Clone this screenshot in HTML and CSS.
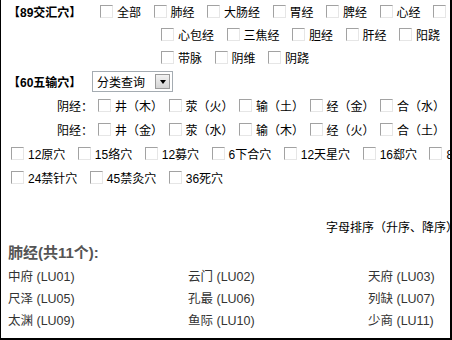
FILE: index.html
```html
<!DOCTYPE html>
<html lang="zh-CN">
<head>
<meta charset="utf-8">
<title>经穴查询</title>
<link rel="stylesheet" href="styles.css">
</head>
<body>
<div class="frame">
  <div class="content">
    <div class="row r1">
      <span class="title">【89交汇穴】</span>
      <div class="opts">
        <label class="opt"><input type="checkbox" class="cb"><span>全部</span></label>
        <label class="opt"><input type="checkbox" class="cb"><span>肺经</span></label>
        <label class="opt"><input type="checkbox" class="cb"><span>大肠经</span></label>
        <label class="opt"><input type="checkbox" class="cb"><span>胃经</span></label>
        <label class="opt"><input type="checkbox" class="cb"><span>脾经</span></label>
        <label class="opt"><input type="checkbox" class="cb"><span>心经</span></label>
        <label class="opt"><input type="checkbox" class="cb"><span>小肠经</span></label>
      </div>
    </div>
    <div class="row r2 indent">
      <label class="opt"><input type="checkbox" class="cb"><span>心包经</span></label>
      <label class="opt"><input type="checkbox" class="cb"><span>三焦经</span></label>
      <label class="opt"><input type="checkbox" class="cb"><span>胆经</span></label>
      <label class="opt"><input type="checkbox" class="cb"><span>肝经</span></label>
      <label class="opt"><input type="checkbox" class="cb"><span>阳跷</span></label>
    </div>
    <div class="row r3 indent">
      <label class="opt"><input type="checkbox" class="cb"><span>带脉</span></label>
      <label class="opt"><input type="checkbox" class="cb"><span>阴维</span></label>
      <label class="opt"><input type="checkbox" class="cb"><span>阴跷</span></label>
    </div>
    <div class="row r4">
      <span class="title t2">【60五输穴】</span>
      <div class="select">
        <span class="sel-text">分类查询</span>
        <span class="sel-btn"><span class="tri"></span></span>
      </div>
    </div>
    <div class="row r5 sub">
      <span class="lbl">阴经：</span>
      <label class="opt"><input type="checkbox" class="cb"><span>井（木）</span></label>
      <label class="opt"><input type="checkbox" class="cb"><span>荥（火）</span></label>
      <label class="opt"><input type="checkbox" class="cb"><span>输（土）</span></label>
      <label class="opt"><input type="checkbox" class="cb"><span>经（金）</span></label>
      <label class="opt"><input type="checkbox" class="cb"><span>合（水）</span></label>
    </div>
    <div class="row r6 sub">
      <span class="lbl">阳经：</span>
      <label class="opt"><input type="checkbox" class="cb"><span>井（金）</span></label>
      <label class="opt"><input type="checkbox" class="cb"><span>荥（水）</span></label>
      <label class="opt"><input type="checkbox" class="cb"><span>输（木）</span></label>
      <label class="opt"><input type="checkbox" class="cb"><span>经（火）</span></label>
      <label class="opt"><input type="checkbox" class="cb"><span>合（土）</span></label>
    </div>
    <div class="row r7 plain">
      <label class="opt"><input type="checkbox" class="cb"><span>12原穴</span></label>
      <label class="opt"><input type="checkbox" class="cb"><span>15络穴</span></label>
      <label class="opt"><input type="checkbox" class="cb"><span>12募穴</span></label>
      <label class="opt"><input type="checkbox" class="cb"><span>6下合穴</span></label>
      <label class="opt"><input type="checkbox" class="cb"><span>12天星穴</span></label>
      <label class="opt"><input type="checkbox" class="cb"><span>16郄穴</span></label>
      <label class="opt"><input type="checkbox" class="cb"><span>8会穴</span></label>
    </div>
    <div class="row r8 plain">
      <label class="opt"><input type="checkbox" class="cb"><span>24禁针穴</span></label>
      <label class="opt"><input type="checkbox" class="cb"><span>45禁灸穴</span></label>
      <label class="opt"><input type="checkbox" class="cb"><span>36死穴</span></label>
    </div>
    <div class="sort">字母排序（升序、降序）</div>
    <h3 class="mhead">肺经(共11个):</h3>
    <ul class="acu">
      <li>中府 (LU01)</li>
      <li>云门 (LU02)</li>
      <li>天府 (LU03)</li>
      <li>侠白 (LU04)</li>
      <li>尺泽 (LU05)</li>
      <li>孔最 (LU06)</li>
      <li>列缺 (LU07)</li>
      <li>经渠 (LU08)</li>
      <li>太渊 (LU09)</li>
      <li>鱼际 (LU10)</li>
      <li>少商 (LU11)</li>
    </ul>
  </div>
</div>
</body>
</html>
```
FILE: styles.css
```css
html, body {
  margin: 0;
  padding: 0;
  background: #fff;
}

body {
  font-family: "Liberation Sans", "Noto Sans CJK SC", sans-serif;
  font-size: 12px;
  color: #000;
}

.frame {
  width: 452px;
  height: 340px;
  box-sizing: border-box;
  border-left: 1px solid #000;
  border-right: 2px solid #000;
  border-bottom: 2px solid #000;
  overflow: hidden;
  background: #fff;
}

.content {
  width: 760px;
  padding-left: 7px;
}

.row {
  display: flex;
  align-items: center;
  white-space: nowrap;
  height: 24px;
}

.r1, .r2, .r3 {
  height: 23px;
}

.title {
  font-weight: bold;
  width: 83px;
  flex: none;
}

.opts {
  display: flex;
  align-items: center;
  margin-left: 9px;
}

.indent {
  padding-left: 153px;
}

.opt {
  display: inline-flex;
  align-items: center;
  margin-right: 12.5px;
  flex: none;
}

.cb {
  -webkit-appearance: none;
  appearance: none;
  width: 13px;
  height: 13px;
  margin: 0 4px 0 0;
  box-sizing: border-box;
  border: 1px solid;
  border-color: #a2a2a2 #e6e6e6 #e6e6e6 #a2a2a2;
  background: #fff;
  flex: none;
}

.select {
  display: flex;
  align-items: center;
  width: 81px;
  height: 21px;
  box-sizing: border-box;
  border: 1px solid #a5acb2;
  background: #fff;
  margin-left: 1px;
}

.sel-text {
  flex: 1;
  padding-left: 4px;
}

.sel-btn {
  width: 15px;
  height: 15px;
  margin-right: 2px;
  box-sizing: border-box;
  border: 1px solid #9a9a9a;
  background: linear-gradient(#f2f2f2, #d4d4d4);
  display: flex;
  align-items: center;
  justify-content: center;
}

.tri {
  width: 0;
  height: 0;
  border-left: 3.5px solid transparent;
  border-right: 3.5px solid transparent;
  border-top: 4px solid #000;
  margin-top: 1px;
}

.sub .lbl {
  width: 85px;
  text-align: right;
  flex: none;
  margin-right: 5px;
}

.sub .opt {
  margin-right: 5.5px;
}

.plain {
  padding-left: 3px;
}

.sort {
  margin-top: 27px;
  height: 24px;
  line-height: 24px;
  padding-left: 318px;
  white-space: nowrap;
}

.mhead {
  margin: 1px 0 0 0;
  height: 24px;
  line-height: 24px;
  font-size: 15px;
  font-weight: bold;
  color: #555;
}

.acu {
  list-style: none;
  margin: 1px 0 0 0;
  padding: 0;
  display: grid;
  grid-template-columns: repeat(4, 180px);
  grid-auto-rows: 22px;
  font-size: 12.5px;
  color: #333;
}

.acu li {
  line-height: 22px;
  white-space: nowrap;
}
```
